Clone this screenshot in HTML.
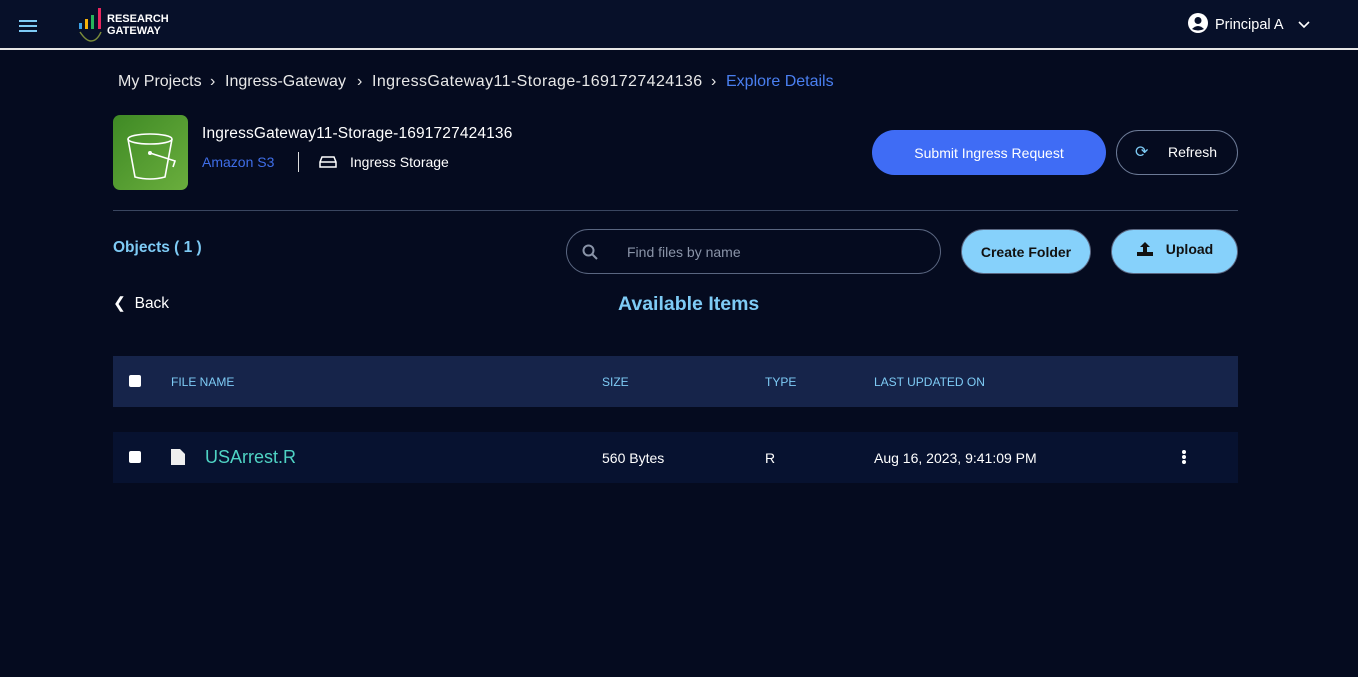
<!DOCTYPE html>
<html><head><style>
*{box-sizing:border-box;margin:0;padding:0}
body{width:1358px;height:677px;background:#050b1f;font-family:"Liberation Sans",sans-serif;color:#fff;position:relative;overflow:hidden}
.abs{position:absolute}
.hdr{left:0;top:0;width:1358px;height:50px;background:#071029;border-bottom:2px solid #e6e6e6}
.t{position:absolute;white-space:nowrap}
.btn{position:absolute;border-radius:23px;display:flex;align-items:center;justify-content:center;font-size:14px}
.cb{position:absolute;width:12px;height:12px;background:#fff;border-radius:2px}
.bc{position:absolute;top:73px;font-size:16px;color:#e8e8e8;white-space:nowrap}
</style></head><body>
<div class="abs hdr">
  <div class="abs" style="left:19px;top:25px;width:18px;height:2px;background:#7ecbf5;box-shadow:0 -5px 0 #7ecbf5,0 5px 0 #7ecbf5"></div>
  <svg class="abs" style="left:78px;top:7px" width="26" height="36">
    <rect x="1" y="16" width="3" height="6" fill="#3aa0e6"/><rect x="7" y="12" width="3" height="10" fill="#f5b10a"/><rect x="13" y="8" width="3" height="14" fill="#28b45a"/><rect x="20" y="1" width="3" height="21" fill="#e8265e"/>
    <path d="M2 25 Q8 34 13 34 Q19 34 23 25" stroke="#7a8c3a" stroke-width="1.5" fill="none"/>
  </svg>
  <div class="t" style="left:107px;top:13px;font-size:11px;font-weight:bold;line-height:12px">RESEARCH<br>GATEWAY</div>
  <svg class="abs" style="left:1188px;top:13px" width="20" height="20"><circle cx="10" cy="10" r="10" fill="#fff"/><circle cx="10" cy="7.5" r="3.5" fill="#071029"/><path d="M4 16 Q10 10 16 16 Q10 19 4 16Z" fill="#071029"/></svg>
  <div class="t" style="left:1215px;top:17px;font-size:14.5px">Principal A</div>
  <svg class="abs" style="left:1298px;top:21px" width="12" height="8"><path d="M1 1 L6 6 L11 1" stroke="#fff" stroke-width="1.6" fill="none"/></svg>
</div>
<div class="bc" style="left:118px">My Projects</div>
<div class="bc" style="left:210px">›</div>
<div class="bc" style="left:225px">Ingress-Gateway</div>
<div class="bc" style="left:357px">›</div>
<div class="bc" style="left:372px;letter-spacing:0.42px">IngressGateway11-Storage-1691727424136</div>
<div class="bc" style="left:711px">›</div>
<div class="bc" style="left:726px;color:#4a7ff0">Explore Details</div>
<div class="abs" style="left:113px;top:115px;width:75px;height:75px;border-radius:7px;background:linear-gradient(135deg,#3f8a25,#6aae3d)">
  <svg width="75" height="75"><path d="M15 24 L22 62 Q37 66 52 62 L59 24" stroke="#fff" stroke-width="1.6" fill="none"/><ellipse cx="37" cy="24" rx="22" ry="5" stroke="#fff" stroke-width="1.6" fill="none"/><path d="M37 38 L62 46 L60 52" stroke="#fff" stroke-width="1.6" fill="none"/><circle cx="37" cy="38" r="2" fill="#fff"/></svg>
</div>
<div class="t" style="left:202px;top:125px;font-size:15.5px;letter-spacing:0.15px">IngressGateway11-Storage-1691727424136</div>
<div class="t" style="left:202px;top:154px;font-size:14px;color:#3f6ee8">Amazon S3</div>
<div class="abs" style="left:298px;top:152px;width:1px;height:20px;background:#ddd"></div>
<svg class="abs" style="left:319px;top:155px" width="18" height="14"><path d="M3 2 H15 L17 7 V12 H1 V7Z M1 7 H17" stroke="#fff" stroke-width="1.5" fill="none"/></svg>
<div class="t" style="left:350px;top:154px;font-size:14px">Ingress Storage</div>
<div class="btn" style="left:872px;top:130px;width:234px;height:45px;background:#3f6cf5">Submit Ingress Request</div>
<div class="abs" style="left:1116px;top:130px;width:122px;height:45px;border:1px solid #6c7a96;border-radius:23px"></div>
<div class="t" style="left:1168px;top:144px;font-size:14px">Refresh</div>
<div class="t" style="left:1135px;top:142px;font-size:16px;color:#7ecbf5">⟳</div>
<div class="abs" style="left:113px;top:210px;width:1125px;height:1px;background:#3a4660"></div>
<div class="t" style="left:113px;top:239px;font-size:15.5px;font-weight:bold;color:#7ecbf5">Objects ( 1 )</div>
<div class="abs" style="left:566px;top:229px;width:375px;height:45px;border:1px solid #5a6680;border-radius:23px"></div>
<svg class="abs" style="left:582px;top:244px" width="16" height="16"><circle cx="6.5" cy="6.5" r="5" stroke="#8a94a8" stroke-width="2" fill="none"/><path d="M10 10 L15 15" stroke="#8a94a8" stroke-width="2"/></svg>
<div class="t" style="left:627px;top:244px;font-size:14px;color:#8a94a8">Find files by name</div>
<div class="btn" style="left:961px;top:229px;width:130px;height:45px;background:#86d1fb;color:#111;font-weight:bold;border:1px solid #5a6680">Create Folder</div>
<div class="btn" style="left:1111px;top:229px;width:127px;height:45px;background:#86d1fb;color:#111;font-weight:bold;border:1px solid #5a6680;padding-bottom:6px"><svg width="18" height="16" style="margin-right:12px"><path d="M9 1 L14 6 H11 V11 H7 V6 H4Z M1 11 H17 V15 H1Z" fill="#111"/></svg>Upload</div>
<div class="t" style="left:113px;top:294px;font-size:15.5px">❮&nbsp; Back</div>
<div class="t" style="left:618px;top:293px;font-size:19.5px;font-weight:bold;color:#7ecbf5">Available Items</div>
<div class="abs" style="left:113px;top:356px;width:1125px;height:51px;background:#16244a"></div>
<div class="cb" style="top:375px;left:129px"></div>
<div class="t" style="left:171px;top:375px;font-size:12px;color:#7ecbf5">FILE NAME</div>
<div class="t" style="left:602px;top:375px;font-size:12px;color:#7ecbf5">SIZE</div>
<div class="t" style="left:765px;top:375px;font-size:12px;color:#7ecbf5">TYPE</div>
<div class="t" style="left:874px;top:375px;font-size:12px;color:#7ecbf5">LAST UPDATED ON</div>
<div class="abs" style="left:113px;top:432px;width:1125px;height:51px;background:#071230"></div>
<div class="cb" style="top:451px;left:129px"></div>
<svg class="abs" style="left:170px;top:448px" width="16" height="18"><path d="M1 1 H10 L15 6 V17 H1Z" fill="#eee"/></svg>
<div class="t" style="left:205px;top:447px;font-size:18px;color:#4fd3c4">USArrest.R</div>
<div class="t" style="left:602px;top:450px;font-size:14px">560 Bytes</div>
<div class="t" style="left:765px;top:450px;font-size:14px">R</div>
<div class="t" style="left:874px;top:450px;font-size:14px">Aug 16, 2023, 9:41:09 PM</div>
<div class="abs" style="left:1182px;top:450px;width:4px;height:4px;border-radius:2px;background:#fff;box-shadow:0 5px 0 #fff,0 10px 0 #fff"></div>
</body></html>
